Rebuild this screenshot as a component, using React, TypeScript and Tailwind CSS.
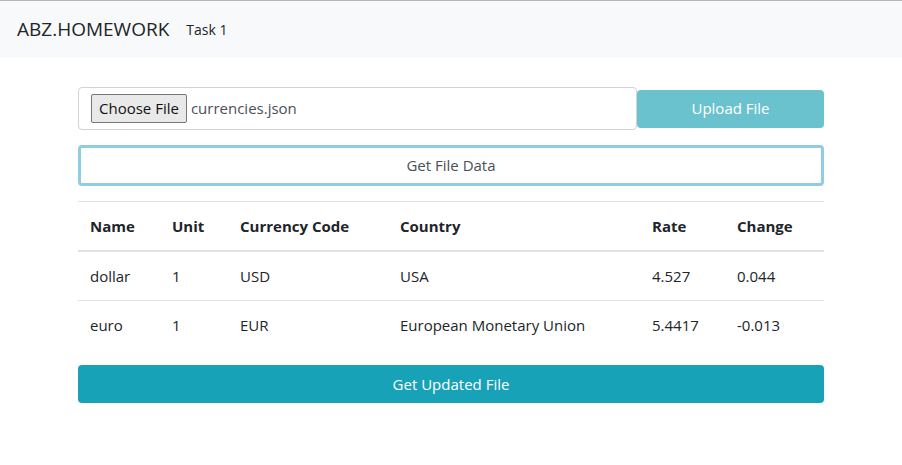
import React from "react";

export default function App() {
  const rows = [
    { name: "dollar", unit: "1", code: "USD", country: "USA", rate: "4.527", change: "0.044" },
    { name: "euro", unit: "1", code: "EUR", country: "European Monetary Union", rate: "5.4417", change: "-0.013" },
  ];
  return (
    <div className="min-h-[465px] bg-white text-[#212529] [font-family:'Segoe_UI','Open_Sans',sans-serif] text-[15px]">
      <nav className="flex items-center h-[57px] bg-[#f8f9fa] border-t border-[#b5b5b5] px-[17px]">
        <span className="text-[19px] text-[#212529] mr-[17px] leading-none">ABZ.HOMEWORK</span>
        <span className="text-[14px] text-[#212529]">Task 1</span>
      </nav>
      <div className="w-[746px] mx-auto pt-[30px]">
        <div className="flex items-center">
          <div className="flex-1 h-[43px] border border-[#ced4da] rounded-[4px] flex items-center px-[12px]">
            <span className="inline-flex items-center h-[29px] px-[7px] border border-[#767676] bg-[#e9e9e9] rounded-[2px] text-[15px] text-[#111]">
              Choose File
            </span>
            <span className="ml-[4px] text-[15px] text-[#495057]">currencies.json</span>
          </div>
          <button className="w-[187px] h-[38px] bg-[#6ac2cf] text-white rounded-[4px] text-[15px]">Upload File</button>
        </div>
        <button className="mt-[15px] w-full h-[41px] border-[3px] border-[#8fcde4] rounded-[4px] bg-white text-[#495057] text-[15px]">
          Get File Data
        </button>
        <table className="mt-[15px] w-full border-collapse text-left">
          <thead>
            <tr className="border-t border-[#dee2e6] border-b-2">
              <th className="px-[12px] py-[12px] leading-[24px] w-[82px] font-bold">Name</th>
              <th className="px-[12px] py-[12px] leading-[24px] w-[68px] font-bold">Unit</th>
              <th className="px-[12px] py-[12px] leading-[24px] w-[160px] font-bold">Currency Code</th>
              <th className="px-[12px] py-[12px] leading-[24px] w-[252px] font-bold">Country</th>
              <th className="px-[12px] py-[12px] leading-[24px] w-[85px] font-bold">Rate</th>
              <th className="px-[12px] py-[12px] leading-[24px] font-bold">Change</th>
            </tr>
          </thead>
          <tbody>
            {rows.map((r, i) => (
              <tr key={r.name} className={i > 0 ? "border-t border-[#dee2e6]" : ""}>
                <td className="px-[12px] py-[12px] leading-[24px]">{r.name}</td>
                <td className="px-[12px] py-[12px] leading-[24px]">{r.unit}</td>
                <td className="px-[12px] py-[12px] leading-[24px]">{r.code}</td>
                <td className="px-[12px] py-[12px] leading-[24px]">{r.country}</td>
                <td className="px-[12px] py-[12px] leading-[24px]">{r.rate}</td>
                <td className="px-[12px] py-[12px] leading-[24px]">{r.change}</td>
              </tr>
            ))}
          </tbody>
        </table>
        <button className="mt-[16px] w-full h-[38px] bg-[#17a2b8] text-white rounded-[4px] text-[15px]">
          Get Updated File
        </button>
      </div>
    </div>
  );
}
